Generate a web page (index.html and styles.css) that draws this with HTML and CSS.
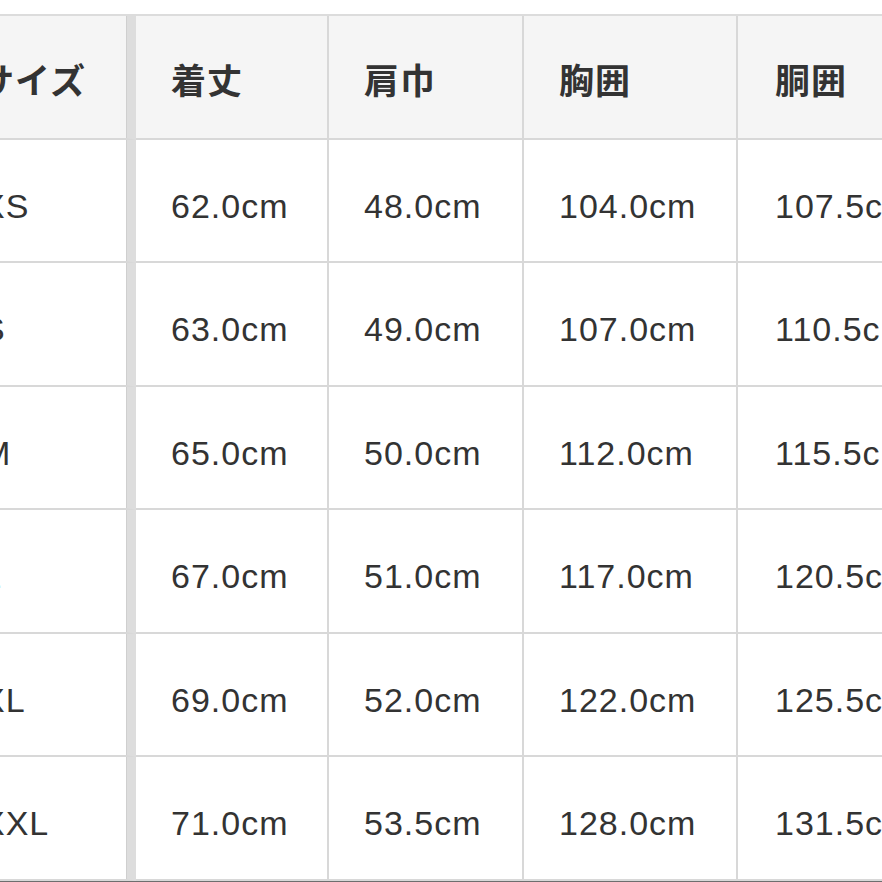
FILE: index.html
```html
<!DOCTYPE html>
<html lang="ja">
<head>
<meta charset="utf-8">
<title>サイズ表</title>
<link rel="stylesheet" href="styles.css">
</head>
<body>
<div class="sheet">
  <div class="size-table">
    <div class="cell head first">サイズ</div>
    <div class="cell head">着丈</div>
    <div class="cell head">肩巾</div>
    <div class="cell head">胸囲</div>
    <div class="cell head last">胴囲</div>

    <div class="cell first">XS</div>
    <div class="cell">62.0cm</div>
    <div class="cell">48.0cm</div>
    <div class="cell">104.0cm</div>
    <div class="cell last">107.5cm</div>

    <div class="cell first">S</div>
    <div class="cell">63.0cm</div>
    <div class="cell">49.0cm</div>
    <div class="cell">107.0cm</div>
    <div class="cell last">110.5cm</div>

    <div class="cell first">M</div>
    <div class="cell">65.0cm</div>
    <div class="cell">50.0cm</div>
    <div class="cell">112.0cm</div>
    <div class="cell last">115.5cm</div>

    <div class="cell first">L</div>
    <div class="cell">67.0cm</div>
    <div class="cell">51.0cm</div>
    <div class="cell">117.0cm</div>
    <div class="cell last">120.5cm</div>

    <div class="cell first">XL</div>
    <div class="cell">69.0cm</div>
    <div class="cell">52.0cm</div>
    <div class="cell">122.0cm</div>
    <div class="cell last">125.5cm</div>

    <div class="cell first">XXL</div>
    <div class="cell">71.0cm</div>
    <div class="cell">53.5cm</div>
    <div class="cell">128.0cm</div>
    <div class="cell last">131.5cm</div>
  </div>
</div>
</body>
</html>
```

FILE: styles.css
```css
html, body {
  margin: 0;
  padding: 0;
  background: #ffffff;
  overflow: hidden;
  width: 882px;
  height: 882px;
}

.sheet {
  padding-top: 14px;
  width: 882px;
  overflow: hidden;
}

.size-table {
  display: grid;
  grid-template-columns: 192px 193px 195px 214px 230px;
  grid-auto-rows: 123.5px;
  margin-left: -56px;
  width: 1024px;
  border-top: 2px solid #dcdcdc;
  border-bottom: 2px solid #6e6e6e;
  font-family: "Liberation Sans", Arial, "Noto Sans CJK JP", sans-serif;
  color: #333333;
}

.cell {
  box-sizing: border-box;
  display: flex;
  align-items: center;
  padding: 12px 0 0 35px;
  border-right: 2px solid #d8d8d8;
  border-bottom: 2px solid #d8d8d8;
  font-size: 34px;
  letter-spacing: 1px;
  white-space: nowrap;
  overflow: hidden;
  background: #ffffff;
}

.cell.first {
  padding-left: 38px;
  border-right: 9px solid #dddddd;
  box-shadow: inset -1px 0 0 #cfcfcf;
}

.cell.last {
  padding-left: 37px;
}

.cell.head {
  background: #f5f5f5;
  font-family: "Noto Sans CJK JP", "Liberation Sans", sans-serif;
  font-weight: 700;
  font-size: 35px;
  letter-spacing: 1px;
  padding-top: 4px;
}

.cell.head.first {
  padding-left: 35px;
}
```
